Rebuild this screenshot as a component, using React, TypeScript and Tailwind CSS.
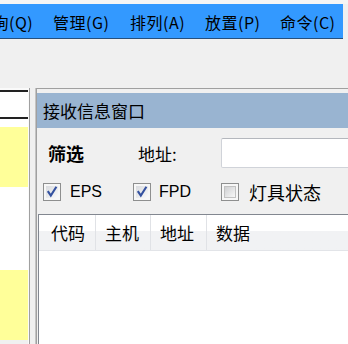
import React from "react";

function CheckBox({ checked }: { checked: boolean }) {
  return (
    <div className="relative w-[18px] h-[18px] shrink-0 border border-[#8e8f8f] bg-[#f7f7f7] p-[2px]">
      <div
        className={
          checked
            ? "w-full h-full bg-linear-to-br from-[#d9dbdf] to-[#fafafa]"
            : "w-full h-full border border-[#c2c2c2] bg-linear-to-br from-[#cfd0d2] to-[#f8f8f8]"
        }
      />
      {checked && (
        <svg className="absolute inset-0" width="16" height="16" viewBox="0 0 16 16">
          <path d="M3.8 7.2 L6.8 11.6 L12.4 2.8" fill="none" stroke="#3552a0" strokeWidth="2.1" />
        </svg>
      )}
    </div>
  );
}

export default function App() {
  return (
    <div className="w-[348px] h-[344px] overflow-hidden bg-[#f0f0f0] flex flex-col text-black font-['Noto_Sans_CJK_SC',sans-serif]">
      {/* top strip */}
      <div className="h-[4px] bg-[#f5f5f5] shrink-0" />
      {/* menu bar */}
      <div className="h-[35px] w-[343px] shrink-0 bg-[#3399ff] border-b border-[#27507c] flex items-center pt-[2px] text-[16px] tracking-[0.5px] leading-none whitespace-nowrap overflow-hidden">
        <span className="ml-[-24px] w-[77px] shrink-0">查询(Q)</span>
        <span className="w-[77px] shrink-0">管理(G)</span>
        <span className="w-[75px] shrink-0">排列(A)</span>
        <span className="w-[75px] shrink-0">放置(P)</span>
        <span className="w-[75px] shrink-0">命令(C)</span>
      </div>
      {/* toolbar space */}
      <div className="h-[49px] shrink-0" />
      {/* main area */}
      <div className="flex flex-1 min-h-0">
        {/* left grid panel */}
        <div className="w-[28px] shrink-0 flex flex-col">
          <div className="h-[2px] bg-[#fafafa]" />
          <div className="h-[2px] bg-[#222222]" />
          <div className="h-[25px] bg-white" />
          <div className="h-[2px] bg-[#222222]" />
          <div className="h-[8px] bg-white" />
          <div className="h-[60px] bg-[#ffff99]" />
          <div className="h-[83px] bg-white" />
          <div className="h-[70px] bg-[#ffff99]" />
          <div className="flex-1 bg-[#f0f0f0]" />
        </div>
        {/* splitter */}
        <div className="w-[9px] shrink-0 flex">
          <div className="w-[1px] bg-[#fbfbfb]" />
          <div className="w-[1px] bg-[#a0a0a0]" />
          <div className="w-[5px] bg-[#f0f0f0]" />
          <div className="w-[1px] bg-[#c4c4c4]" />
          <div className="w-[1px] bg-[#a0a0a0]" />
        </div>
        {/* right panel */}
        <div className="flex-1 min-w-0 flex flex-col">
          <div className="h-[1px] bg-[#a0a0a0] shrink-0" />
          <div className="h-[4px] shrink-0" />
          <div className="h-[35px] shrink-0 bg-[#99b4d1] flex items-center pl-[6px] text-[17px] leading-none whitespace-nowrap">
            接收信息窗口
          </div>
          {/* filter area */}
          <div className="h-[86px] shrink-0 flex flex-col pt-[10px]">
            <div className="h-[30px] flex items-center whitespace-nowrap">
              <span className="ml-[11px] w-[90px] shrink-0 font-bold text-[18px] leading-none">筛选</span>
              <span className="w-[83px] shrink-0 text-[17px] leading-none">地址:</span>
              <div className="h-[30px] w-[140px] shrink-0 bg-white border border-[#d0d3d9] border-t-[#b4b7bd] rounded-[2px]" />
            </div>
            <div className="mt-[15px] h-[18px] flex items-center whitespace-nowrap">
              <div className="ml-[6px] w-[90px] shrink-0 flex items-center">
                <CheckBox checked />
                <span className="ml-[9px] text-[16px] leading-none font-['Liberation_Sans',sans-serif]">EPS</span>
              </div>
              <div className="w-[88px] shrink-0 flex items-center">
                <CheckBox checked />
                <span className="ml-[8px] text-[16px] leading-none font-['Liberation_Sans',sans-serif]">FPD</span>
              </div>
              <div className="flex items-center">
                <CheckBox checked={false} />
                <span className="ml-[10px] text-[18px] leading-none">灯具状态</span>
              </div>
            </div>
          </div>
          {/* list view */}
          <div className="flex-1 min-h-0 ml-[1px] bg-white border-l border-t border-[#828790] flex flex-col">
            <div className="h-[36px] shrink-0 flex border-b border-[#e2e4e8] bg-linear-to-b from-white from-45% to-[#f1f2f4] to-45% text-[17px] leading-none whitespace-nowrap">
              <div className="w-[57px] shrink-0 border-r border-[#e0e2e6] flex items-center pl-[12px]">代码</div>
              <div className="w-[55px] shrink-0 border-r border-[#e0e2e6] flex items-center pl-[9px]">主机</div>
              <div className="w-[56px] shrink-0 border-r border-[#e0e2e6] flex items-center pl-[9px]">地址</div>
              <div className="flex-1 flex items-center pl-[9px]">数据</div>
            </div>
            <div className="flex-1" />
          </div>
        </div>
      </div>
    </div>
  );
}
